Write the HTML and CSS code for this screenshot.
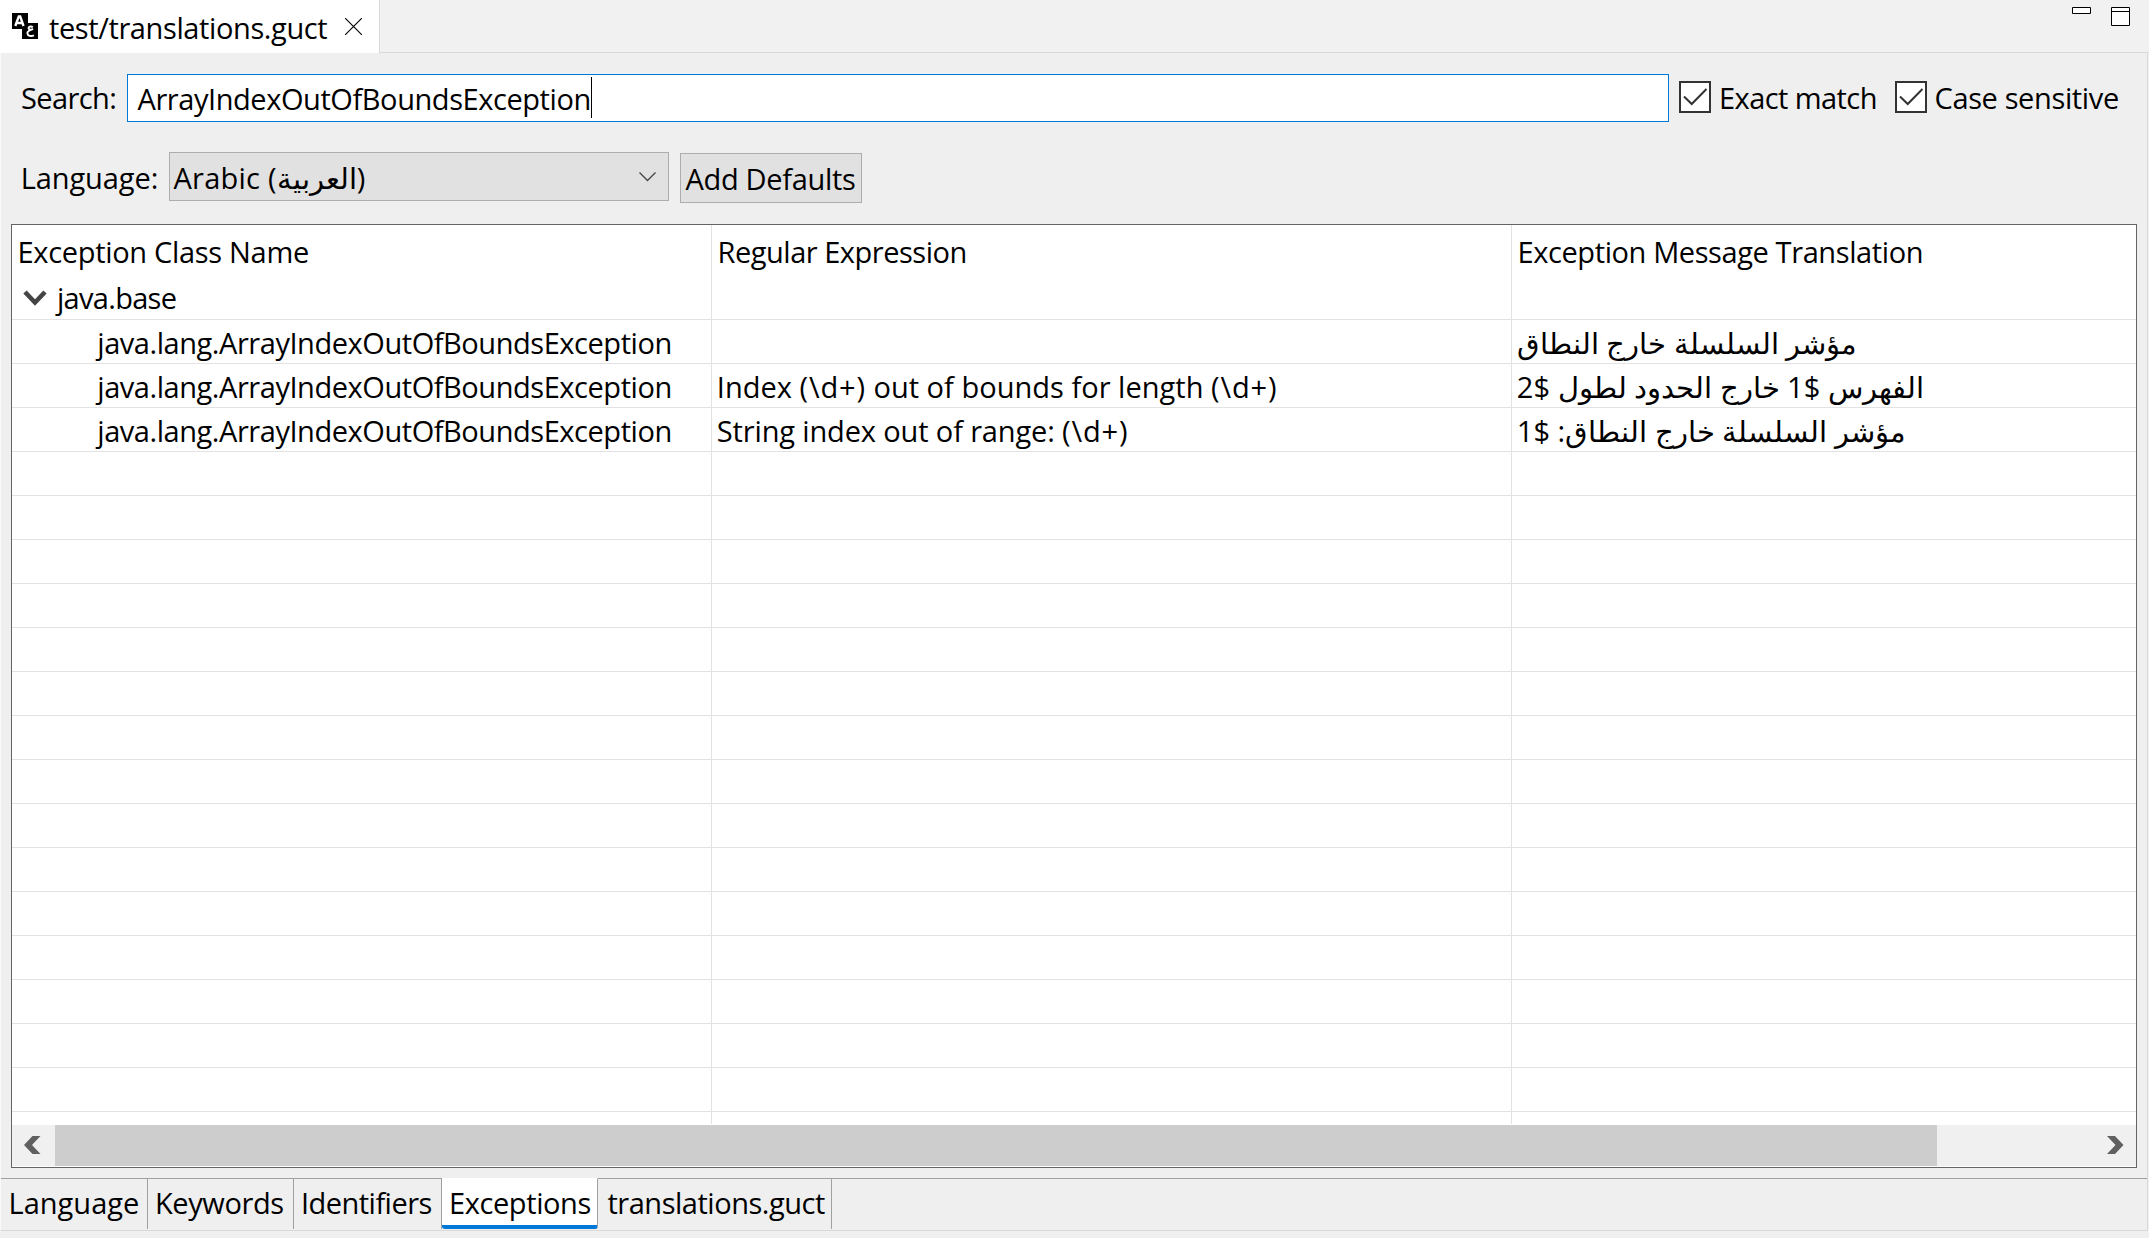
FILE: index.html
```html
<!DOCTYPE html>
<html lang="en">
<head>
<meta charset="utf-8">
<title>test/translations.guct</title>
<link rel="stylesheet" href="styles.css">
</head>
<body>
<div class="window">
  <header class="tabbar">
    <div class="file-tab">
      <svg class="file-icon" width="26" height="26" viewBox="0 0 26 26">
        <path d="M0 0h16v10h10v16H10V16H0z" fill="#000"/>
        <path d="M3.300 13 6.800 3.400h1.400L11.500 13M5 10h5" fill="none" stroke="#fff" stroke-width="2.400"/>
        <path d="M20.800 14.200c-2-1.400-4.500-.4-4.200 1.200.2 1.300 2 1.500 4.600.8-3.600.9-6 2.100-5.800 4.200.3 2.700 3.600 3.200 6.600 2" fill="none" stroke="#fff" stroke-width="1.900"/>
      </svg>
      <span class="t file-name">test/translations.guct</span>
      <svg class="close" width="17" height="17" viewBox="0 0 17 17"><path d="M0 0l17 17M17 0L0 17" stroke="#000" stroke-width="1.1"/></svg>
    </div>
    <div class="window-tools">
      <svg width="19" height="7" viewBox="0 0 19 7"><path d="M.5.5h18v6H.5z" fill="#fff" stroke="#000"/></svg>
      <svg width="19" height="19" viewBox="0 0 19 19"><path d="M.5.5h18v18H.5zM.5 4.500h18" fill="#fff" stroke="#000"/></svg>
    </div>
  </header>

  <main class="editor">
    <div class="search-row">
      <label class="t label-search">Search:</label>
      <div class="search-input"><span class="t query">ArrayIndexOutOfBoundsException</span><i class="caret"></i></div>
      <div class="check check-exact">
        <svg class="box" width="32" height="32" viewBox="0 0 32 32"><path d="M1 1h30v30H1z" fill="#fff" stroke="#333" stroke-width="2"/><path d="M5 15.500l7.700 7.500L27.500 8" fill="none" stroke="#333" stroke-width="2"/></svg>
        <span class="t">Exact match</span>
      </div>
      <div class="check check-case">
        <svg class="box" width="32" height="32" viewBox="0 0 32 32"><path d="M1 1h30v30H1z" fill="#fff" stroke="#333" stroke-width="2"/><path d="M5 15.500l7.700 7.500L27.500 8" fill="none" stroke="#333" stroke-width="2"/></svg>
        <span class="t">Case sensitive</span>
      </div>
    </div>

    <div class="language-row">
      <label class="t label-language">Language:</label>
      <div class="combo">
        <span class="t"><span class="combo-name">Arabic (</span>العربية)</span>
        <svg width="17" height="10" viewBox="0 0 17 10"><path d="M.5.5l8 8 8-8" fill="none" stroke="#444" stroke-width="1.3"/></svg>
      </div>
      <div class="button"><span class="t">Add Defaults</span></div>
    </div>

    <section class="table">
      <div class="rows">
        <div class="row head">
          <div class="cell"><span class="t h-class">Exception Class Name</span></div>
          <div class="cell"><span class="t h-regex">Regular Expression</span></div>
          <div class="cell"><span class="t h-message">Exception Message Translation</span></div>
        </div>
        <div class="row group">
          <div class="cell">
            <svg class="twisty" width="24" height="16" viewBox="0 0 24 16"><path d="M2 2l10 10.500L22 2" fill="none" stroke="#444" stroke-width="4.600"/></svg>
            <span class="t group-name">java.base</span>
          </div>
          <div class="cell"></div><div class="cell"></div>
        </div>
        <div class="row">
          <div class="cell"><span class="t class-name">java.lang.ArrayIndexOutOfBoundsException</span></div>
          <div class="cell"></div>
          <div class="cell"><span class="t">مؤشر السلسلة خارج النطاق</span></div>
        </div>
        <div class="row">
          <div class="cell"><span class="t class-name">java.lang.ArrayIndexOutOfBoundsException</span></div>
          <div class="cell"><span class="t regex-length">Index <span class="digits">(\d+)</span> out of bounds for length <span class="digits">(\d+)</span></span></div>
          <div class="cell"><span class="t">الفهرس $1 خارج الحدود لطول $2</span></div>
        </div>
        <div class="row">
          <div class="cell"><span class="t class-name">java.lang.ArrayIndexOutOfBoundsException</span></div>
          <div class="cell"><span class="t regex-range">String index out of range: <span class="digits">(\d+)</span></span></div>
          <div class="cell"><span class="t">مؤشر السلسلة خارج النطاق: $1</span></div>
        </div>
        <div class="row"><div class="cell"></div><div class="cell"></div><div class="cell"></div></div>
        <div class="row"><div class="cell"></div><div class="cell"></div><div class="cell"></div></div>
        <div class="row"><div class="cell"></div><div class="cell"></div><div class="cell"></div></div>
        <div class="row"><div class="cell"></div><div class="cell"></div><div class="cell"></div></div>
        <div class="row"><div class="cell"></div><div class="cell"></div><div class="cell"></div></div>
        <div class="row"><div class="cell"></div><div class="cell"></div><div class="cell"></div></div>
        <div class="row"><div class="cell"></div><div class="cell"></div><div class="cell"></div></div>
        <div class="row"><div class="cell"></div><div class="cell"></div><div class="cell"></div></div>
        <div class="row"><div class="cell"></div><div class="cell"></div><div class="cell"></div></div>
        <div class="row"><div class="cell"></div><div class="cell"></div><div class="cell"></div></div>
        <div class="row"><div class="cell"></div><div class="cell"></div><div class="cell"></div></div>
        <div class="row"><div class="cell"></div><div class="cell"></div><div class="cell"></div></div>
        <div class="row"><div class="cell"></div><div class="cell"></div><div class="cell"></div></div>
        <div class="row"><div class="cell"></div><div class="cell"></div><div class="cell"></div></div>
        <div class="row"><div class="cell"></div><div class="cell"></div><div class="cell"></div></div>
        <div class="row last"><div class="cell"></div><div class="cell"></div><div class="cell"></div></div>
      </div>
      <div class="scrollbar">
        <svg class="arrow-left" width="17" height="18" viewBox="0 0 17 18"><path d="M8.500 0H16.500L8 9l8.500 9H8.500L0 9z" fill="#606060"/></svg>
        <div class="thumb"></div>
        <svg class="arrow-right" width="17" height="18" viewBox="0 0 17 18"><path d="M8 0H0l8.500 9L0 18h8l8.500-9z" fill="#606060"/></svg>
      </div>
    </section>

    <nav class="pages">
      <div class="page p-language"><span class="t">Language</span></div>
      <div class="page p-keywords"><span class="t">Keywords</span></div>
      <div class="page p-identifiers"><span class="t">Identifiers</span></div>
      <div class="page p-exceptions selected"><span class="t">Exceptions</span></div>
      <div class="page p-source"><span class="t">translations.guct</span></div>
      <div class="page-rest"></div>
    </nav>
  </main>
</div>
</body>
</html>
```
FILE: styles.css
```css
* { box-sizing: border-box; }
body {
  margin: 0;
  height: 1238px;
  background: #f0f0f0;
  color: #000;
  font: 29px/40px "Open Sans", "Noto Sans", sans-serif;
  overflow: hidden;
}
svg { display: block; flex: none; }
.t { display: block; flex: none; white-space: nowrap; }

.tabbar { display: flex; height: 53px; }
.file-tab {
  display: flex;
  width: 380px;
  padding: 8px 0 0 12px;
  background: #fff;
  border-right: 1px solid #d9d9d9;
}
.file-icon { margin-top: 5px; }
.file-name { width: 296px; padding-left: 11px; letter-spacing: -.39px; }
.close { margin: 10px 0 0 11px; }
.window-tools {
  display: flex;
  flex: 1;
  justify-content: flex-end;
  gap: 20px;
  padding: 7px 19px 0 0;
  background: #f1f1f1;
  border-bottom: 1px solid #d9d9d9;
}

.editor {
  display: flex;
  flex-direction: column;
  width: 2148px;
  height: 1178px;
  border: solid #d9d9d9;
  border-width: 0 1px 1px 0;
  border-left: 1px solid #fafafa;
  background: #efefef;
}
.search-row { display: flex; height: 99px; padding-top: 21px; }
.label-search { width: 126px; padding: 4px 0 0 20px; letter-spacing: -.6px; }
.search-input {
  display: flex;
  width: 1542px;
  height: 48px;
  padding: 4px 0 0 9.500px;
  border: 1px solid #0078d7;
  background: #fff;
}
.query { width: 453.500px; letter-spacing: -.43px; }
.caret { width: 1px; height: 41px; margin-top: -2px; background: #000; }
.check { display: flex; padding-top: 4px; }
.check .box { margin-top: 3px; }
.check-exact { width: 226px; padding-left: 10px; }
.check .t { margin-left: 7.500px; letter-spacing: -.37px; }
.check-exact .t { margin-left: 8px; letter-spacing: -.57px; }

.language-row { display: flex; height: 72px; }
.label-language { width: 168px; padding: 6px 0 0 19.700px; letter-spacing: -.09px; }
.combo {
  display: flex;
  justify-content: space-between;
  width: 500px;
  height: 49px;
  padding: 5px 12px 0 3.500px;
  border: 1px solid #adadad;
  background: #e1e1e1;
}
.combo svg { margin-top: 14px; }
.combo-name { letter-spacing: .25px; }
.button {
  width: 182px;
  height: 50px;
  margin: 1px 0 0 11px;
  padding: 5px 0 0 4.500px;
  border: 1px solid #adadad;
  background: #e1e1e1;
  letter-spacing: -.32px;
}

.table {
  width: 2126px;
  height: 944px;
  margin-left: 10px;
  border: 1px solid #646464;
  background: #fff;
}
.rows { height: 900px; overflow: hidden; }
.row {
  display: grid;
  grid-template-columns: 700px 800px 1fr;
  height: 44px;
  border-bottom: 1px solid #e2e2e2;
}
.cell { display: flex; padding: 3px 0 0 4.800px; border-right: 1px solid #e2e2e2; }
.cell:last-child { border-right: 0; }
.head { height: 51px; border-bottom: 0; }
.head .cell { padding: 7px 0 0 5.500px; }
.group .cell { padding-top: 2px; }
.last { height: 12px; border-bottom: 0; }
.h-class { letter-spacing: -.31px; }
.h-regex { letter-spacing: -.476px; }
.h-message { letter-spacing: -.4px; }
.twisty { margin: 12px 0 0 6.200px; }
.group-name { margin-left: 10px; letter-spacing: -.7px; }
.class-name { margin-left: 80.500px; letter-spacing: -.45px; }
.regex-length { letter-spacing: .02px; }
.regex-range { letter-spacing: -.14px; }
.regex-length .digits, .regex-range .digits { letter-spacing: .85px; }

.scrollbar { display: flex; height: 41px; background: #f0f0f0; }
.arrow-left { margin: 11px 14px 0 12px; }
.thumb { width: 1882px; background: #cdcdcd; }
.arrow-right { margin: 11px 0 0 170px; }

.pages { display: flex; height: 52px; margin-top: 10px; }
.page {
  height: 51px;
  padding-top: 4px;
  border-top: 1px solid #a0a0a0;
  border-right: 1px solid #a0a0a0;
}
.page-rest { flex: 1; border-top: 1px solid #a0a0a0; }
.p-language { width: 147px; padding-left: 7.500px; letter-spacing: .02px; }
.p-keywords { width: 146px; padding-left: 7px; letter-spacing: -.4px; }
.p-identifiers { width: 148px; padding-left: 7px; letter-spacing: -.53px; }
.p-exceptions { width: 156px; padding-left: 7px; letter-spacing: -.4px; }
.p-source { width: 234px; padding-left: 9.500px; letter-spacing: -.48px; }
.selected {
  border-top-color: #fff;
  border-bottom: 4px solid #0078d7;
  border-radius: 0 0 3px 3px;
  background: #fff;
}
```
